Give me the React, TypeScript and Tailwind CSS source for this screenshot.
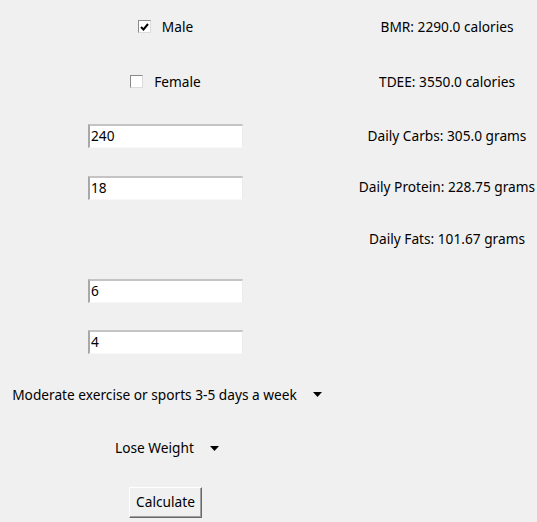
const font = { fontFamily: '"Noto Sans", "Open Sans", sans-serif' };

function Check({ label, checked }: { label: string; checked?: boolean }) {
  return (
    <div className="flex items-center gap-[11px]">
      <div className="w-[13px] h-[13px] bg-white border border-[#8a8a8a] border-r-[#dcdcdc] border-b-[#dcdcdc] flex items-center justify-center">
        {checked && (
          <svg width="9" height="8" viewBox="0 0 9 8">
            <path d="M1 4 L3.5 6.5 L8 1" fill="none" stroke="#000" strokeWidth="2" />
          </svg>
        )}
      </div>
      <span>{label}</span>
    </div>
  );
}

function Entry({ value }: { value: string }) {
  return (
    <div className="w-[155px] h-[24px] bg-white border-t-2 border-l-2 border-t-[#c4c4c4] border-l-[#a8a8a8] border-r border-b border-r-[#ececec] border-b-[#f7f7f7] flex items-center pl-[1px]">
      {value}
    </div>
  );
}

function Menu({ label }: { label: string }) {
  return (
    <div className="flex items-center gap-[16px] pl-[3px]">
      <span>{label}</span>
      <svg width="9" height="5" viewBox="0 0 9 5">
        <path d="M0 0 H9 L4.5 5 Z" fill="#000" />
      </svg>
    </div>
  );
}

export default function App() {
  const rows: [number, React.ReactNode, string][] = [
    [54, <Check label="Male" checked />, 'BMR: 2290.0 calories'],
    [56, <Check label="Female" />, 'TDEE: 3550.0 calories'],
    [52, <Entry value="240" />, 'Daily Carbs: 305.0 grams'],
    [51, <Entry value="18" />, 'Daily Protein: 228.75 grams'],
    [52, null, 'Daily Fats: 101.67 grams'],
    [51, <Entry value="6" />, ''],
    [52, <Entry value="4" />, ''],
    [54, <Menu label="Moderate exercise or sports 3-5 days a week" />, ''],
    [53, <Menu label="Lose Weight" />, ''],
    [54, (
      <button className="w-[73px] h-[31px] bg-[#f0f0f0] border border-t-white border-l-white border-r-[#696969] border-b-[#696969] shadow-[inset_-1px_-1px_0_#a0a0a0]">
        Calculate
      </button>
    ), ''],
  ];

  return (
    <div className="w-[537px] h-[522px] bg-[#f0f0f0] text-black text-[13.7px] overflow-hidden" style={font}>
      <div className="grid grid-cols-[331px_1fr]">
        {rows.map(([h, left, right], i) => (
          <div key={i} className="contents">
            <div className="flex items-center justify-center" style={{ height: h }}>
              {left}
            </div>
            <div className="flex items-center justify-center pl-[26px] whitespace-nowrap" style={{ height: h }}>
              {right}
            </div>
          </div>
        ))}
      </div>
    </div>
  );
}
